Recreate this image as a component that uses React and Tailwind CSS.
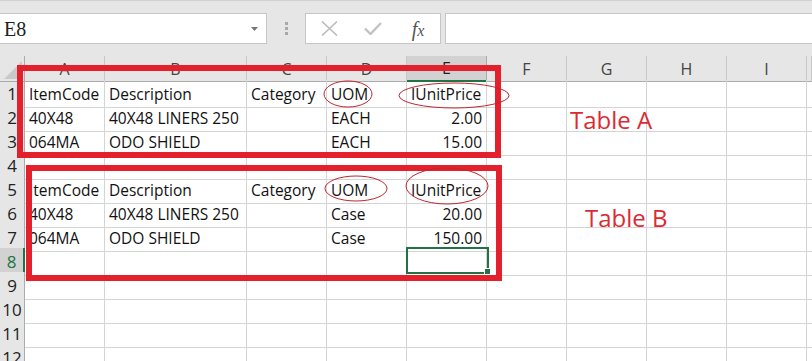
import React from "react";

const cols = ["A", "B", "C", "D", "E", "F", "G", "H", "I", ""];

const header = ["ItemCode", "Description", "Category", "UOM", "IUnitPrice"];

const rows = [
  header,
  ["40X48", "40X48 LINERS 250", "", "EACH", "2.00"],
  ["064MA", "ODO SHIELD", "", "EACH", "15.00"],
  [],
  header,
  ["40X48", "40X48 LINERS 250", "", "Case", "20.00"],
  ["064MA", "ODO SHIELD", "", "Case", "150.00"],
  [],
  [],
  [],
  [],
  [],
];

const gridCols = "grid grid-cols-[25px_80px_142px_80px_80px_80px_80px_80px_80px_80px_1fr]";

const isNumber = (v) => /^[0-9.]+$/.test(v) && v.includes(".");

const FormulaBar = () => (
  <div className="h-[56px] bg-[#e6e6e6] border-t border-[#d0d0d0] flex items-start pt-[12px]">
    <div className="w-[267px] h-[31px] bg-white border border-l-0 border-[#c6c6c6] flex items-center justify-between pl-[4px] pr-[8px]">
      <span className="font-['Liberation_Serif',serif] text-[20px] text-[#222] leading-none">E8</span>
      <svg width="7" height="4" viewBox="0 0 7 4">
        <polygon points="0,0 7,0 3.5,4" fill="#777" />
      </svg>
    </div>
    <div className="w-[38px] h-[31px] flex flex-col items-center justify-center gap-[2px]">
      <span className="w-[3px] h-[3px] bg-[#a8a8a8]" />
      <span className="w-[3px] h-[3px] bg-[#a8a8a8]" />
      <span className="w-[3px] h-[3px] bg-[#a8a8a8]" />
    </div>
    <div className="w-[136px] h-[31px] bg-white border border-[#c6c6c6] flex items-center">
      <div className="w-[44px] flex justify-center pl-[2px]">
        <svg width="17" height="15" viewBox="0 0 17 15">
          <path d="M1 0.5 L16 14.5 M16 0.5 L1 14.5" stroke="#bcbcbc" strokeWidth="1.6" />
        </svg>
      </div>
      <div className="w-[46px] flex justify-center">
        <svg width="18" height="13" viewBox="0 0 18 13">
          <path d="M1 6.5 L6.5 12 L17 1" stroke="#c2c2c2" strokeWidth="2.4" fill="none" />
        </svg>
      </div>
      <div className="w-[44px] flex justify-center">
        <span className="font-['Liberation_Serif',serif] italic text-[20px] text-[#555] leading-none">
          f<span className="text-[16px]">x</span>
        </span>
      </div>
    </div>
    <div className="flex-1 ml-[4px] h-[31px] bg-white border border-r-0 border-[#c6c6c6]" />
  </div>
);

const ColumnHeaders = () => (
  <div className={`${gridCols} h-[24px]`}>
    <div className="bg-[#e6e6e6] border-r border-b border-[#ababab] relative">
      <svg className="absolute right-[2px] bottom-[2px]" width="18" height="18" viewBox="0 0 18 18">
        <polygon points="18,0 18,18 0,18" fill="#c9c9c9" />
      </svg>
    </div>
    {cols.map((c, i) =>
      c === "E" ? (
        <div
          key={i}
          className="bg-[#d2d2d2] border-r border-[#ababab] border-b-2 border-b-[#217346] flex items-center justify-center text-[16px] text-[#222]"
        >
          {c}
        </div>
      ) : (
        <div
          key={i}
          className="bg-[#e6e6e6] border-r border-[#c8c8c8] border-b border-b-[#ababab] flex items-center justify-center text-[16px] text-[#444]"
        >
          {c}
        </div>
      )
    )}
  </div>
);

const Row = ({ n, cells }) => (
  <div className={`${gridCols} h-[24px]`}>
    {n === 8 ? (
      <div className="bg-[#d2d2d2] border-r-2 border-r-[#217346] border-b border-b-[#c8c8c8] flex items-center justify-center pt-[1px] text-[17px] text-[#217346]">
        {n}
      </div>
    ) : (
      <div className="bg-[#e6e6e6] border-r border-r-[#ababab] border-b border-b-[#d0d0d0] flex items-center justify-center pt-[1px] text-[17px] text-[#222]">
        {n}
      </div>
    )}
    {cols.map((c, i) => {
      const v = cells[i] || "";
      return (
        <div
          key={i}
          className={`border-r border-b border-[#d4d4d4] flex items-center px-[4px] pt-[2px] text-[15.5px] text-[#111] whitespace-nowrap overflow-visible ${
            isNumber(v) ? "justify-end" : ""
          }`}
        >
          {v}
        </div>
      );
    })}
  </div>
);

const Annotations = () => (
  <>
    <div className="absolute left-[17px] top-[65px] w-[484px] h-[93px] border-[6px] border-[#e3202c]" />
    <div className="absolute left-[26px] top-[165px] w-[476px] h-[116px] border-[6px] border-[#e3202c]" />
    <svg className="absolute left-0 top-0" width="812" height="361">
      <g fill="none" stroke="#c0262d" strokeWidth="1">
        <ellipse cx="348" cy="94" rx="24" ry="13" />
        <ellipse cx="454" cy="95.5" rx="55" ry="12.5" />
        <ellipse cx="356" cy="188.5" rx="31" ry="12.5" />
        <ellipse cx="447" cy="186" rx="41" ry="18" />
      </g>
    </svg>
    <div className="absolute left-[406px] top-[247px] w-[83px] h-[27px] border-2 border-[#217346]" />
    <div className="absolute left-[484px] top-[268px] w-[7px] h-[7px] bg-[#217346] border border-white" />
    <div className="absolute left-[570px] top-[106px] text-[24px] text-[#dc2a33] leading-none pt-[2px]">Table A</div>
    <div className="absolute left-[585px] top-[204px] text-[24px] text-[#dc2a33] leading-none pt-[2px]">Table B</div>
  </>
);

export default function App() {
  return (
    <div className="relative w-[812px] h-[361px] overflow-hidden bg-white font-['Open_Sans',sans-serif]">
      <FormulaBar />
      <ColumnHeaders />
      {rows.map((r, i) => (
        <Row key={i} n={i + 1} cells={r} />
      ))}
      <Annotations />
    </div>
  );
}
